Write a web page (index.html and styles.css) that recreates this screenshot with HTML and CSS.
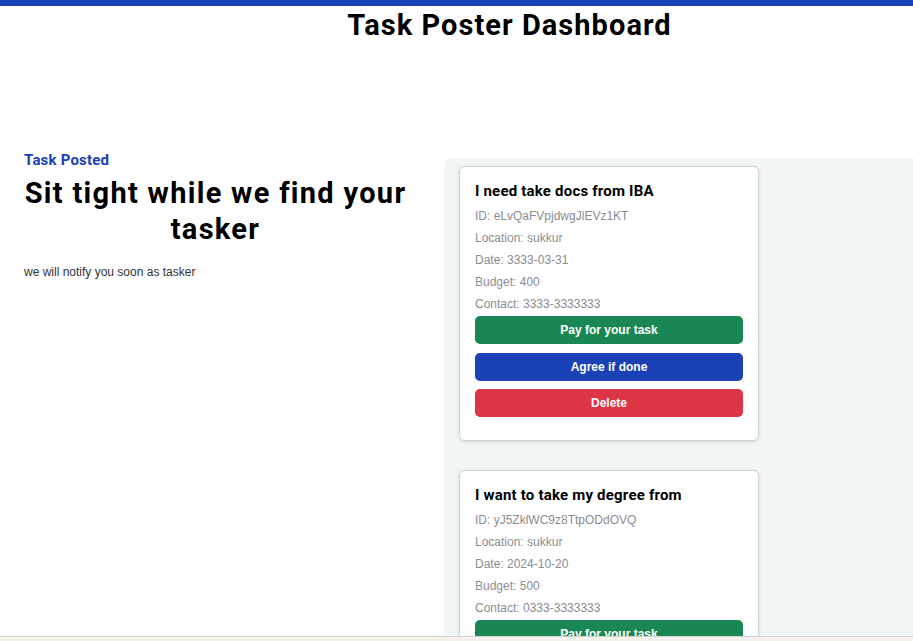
FILE: index.html
```html
<!DOCTYPE html>
<html lang="en">
<head>
<meta charset="utf-8">
<title>Task Poster Dashboard</title>
<link rel="stylesheet" href="styles.css">
</head>
<body>
<div class="topbar"></div>
<header class="header">
  <h1 class="page-title">Task Poster Dashboard</h1>
</header>
<main class="main">
  <section class="intro">
    <div class="eyebrow">Task Posted</div>
    <h2 class="intro-title">Sit tight while we find your tasker</h2>
    <p class="intro-text">we will notify you soon as tasker</p>
  </section>
  <section class="panel">
    <article class="card">
      <h3 class="card-title">I need take docs from IBA</h3>
      <p class="info">ID: eLvQaFVpjdwgJlEVz1KT</p>
      <p class="info">Location: sukkur</p>
      <p class="info">Date: 3333-03-31</p>
      <p class="info">Budget: 400</p>
      <p class="info">Contact: 3333-3333333</p>
      <div class="actions">
        <button class="btn btn-green">Pay for your task</button>
        <button class="btn btn-blue">Agree if done</button>
        <button class="btn btn-red">Delete</button>
      </div>
    </article>
    <article class="card">
      <h3 class="card-title">I want to take my degree from</h3>
      <p class="info">ID: yJ5ZklWC9z8TtpODdOVQ</p>
      <p class="info">Location: sukkur</p>
      <p class="info">Date: 2024-10-20</p>
      <p class="info">Budget: 500</p>
      <p class="info">Contact: 0333-3333333</p>
      <div class="actions">
        <button class="btn btn-green">Pay for your task</button>
        <button class="btn btn-blue">Agree if done</button>
        <button class="btn btn-red">Delete</button>
      </div>
    </article>
  </section>
</main>
<div class="bottom-strip"></div>
</body>
</html>
```

FILE: styles.css
```css
* { box-sizing: border-box; }
html, body { margin: 0; padding: 0; }
body {
  background: #ffffff;
  font-family: "Liberation Sans", Arial, sans-serif;
  color: #222;
  overflow: hidden;
  height: 641px;
}
.topbar {
  height: 6px;
  background: #1a41b5;
}
.header {
  padding-left: 106px;
  height: 145px;
}
.page-title {
  margin: 0;
  padding-top: 1px;
  text-align: center;
  font-family: Roboto, "DejaVu Sans", sans-serif;
  font-weight: 700;
  font-size: 29px;
  letter-spacing: 1.05px;
  line-height: 36px;
  color: #000;
}
.main {
  display: flex;
  align-items: flex-start;
}
.intro {
  width: 444px;
  padding: 0 37px 0 24px;
}
.eyebrow {
  font-family: Roboto, "DejaVu Sans", sans-serif;
  font-weight: 700;
  font-size: 15px;
  letter-spacing: 0.2px;
  line-height: 18px;
  color: #1a41b5;
}
.intro-title {
  margin: 6px -4px 0;
  text-align: center;
  font-family: Roboto, "DejaVu Sans", sans-serif;
  font-weight: 700;
  font-size: 29px;
  letter-spacing: 1.3px;
  line-height: 36px;
  color: #000;
}
.intro-text {
  margin: 18px 0 0;
  font-size: 12px;
  line-height: 14px;
  color: #333;
}
.panel {
  flex: 1;
  margin-top: 7px;
  background: #f3f6f7;
  border-top-left-radius: 8px;
  padding: 8px 15px 0;
  min-height: 500px;
}
.card {
  width: 300px;
  background: #fff;
  border: 1px solid #cfd2d4;
  border-radius: 6px;
  box-shadow: 0 1px 4px rgba(0,0,0,0.12);
  padding: 15px 15px 23px;
  margin-bottom: 29px;
}
.card-title {
  margin: 0 0 5px;
  font-family: Roboto, "DejaVu Sans", sans-serif;
  font-weight: 700;
  font-size: 15px;
  letter-spacing: 0.2px;
  line-height: 18px;
  color: #000;
}
.info {
  margin: 0;
  font-size: 12px;
  line-height: 22px;
  color: #8a8d90;
}
.actions {
  display: flex;
  flex-direction: column;
  gap: 8.5px;
  margin-top: 1px;
}
.btn {
  height: 28px;
  border: none;
  border-radius: 5px;
  color: #fff;
  font-family: "Liberation Sans", Arial, sans-serif;
  font-weight: 700;
  font-size: 12px;
  padding: 0;
}
.btn-green { background: #198754; }
.btn-blue { background: #1a41b5; }
.btn-red { background: #dc3545; }
.bottom-strip {
  position: fixed;
  left: 0;
  right: 0;
  bottom: 0;
  height: 5px;
  border-top: 1px solid #d2d2d2;
  background: #f6f1ea;
}
```
